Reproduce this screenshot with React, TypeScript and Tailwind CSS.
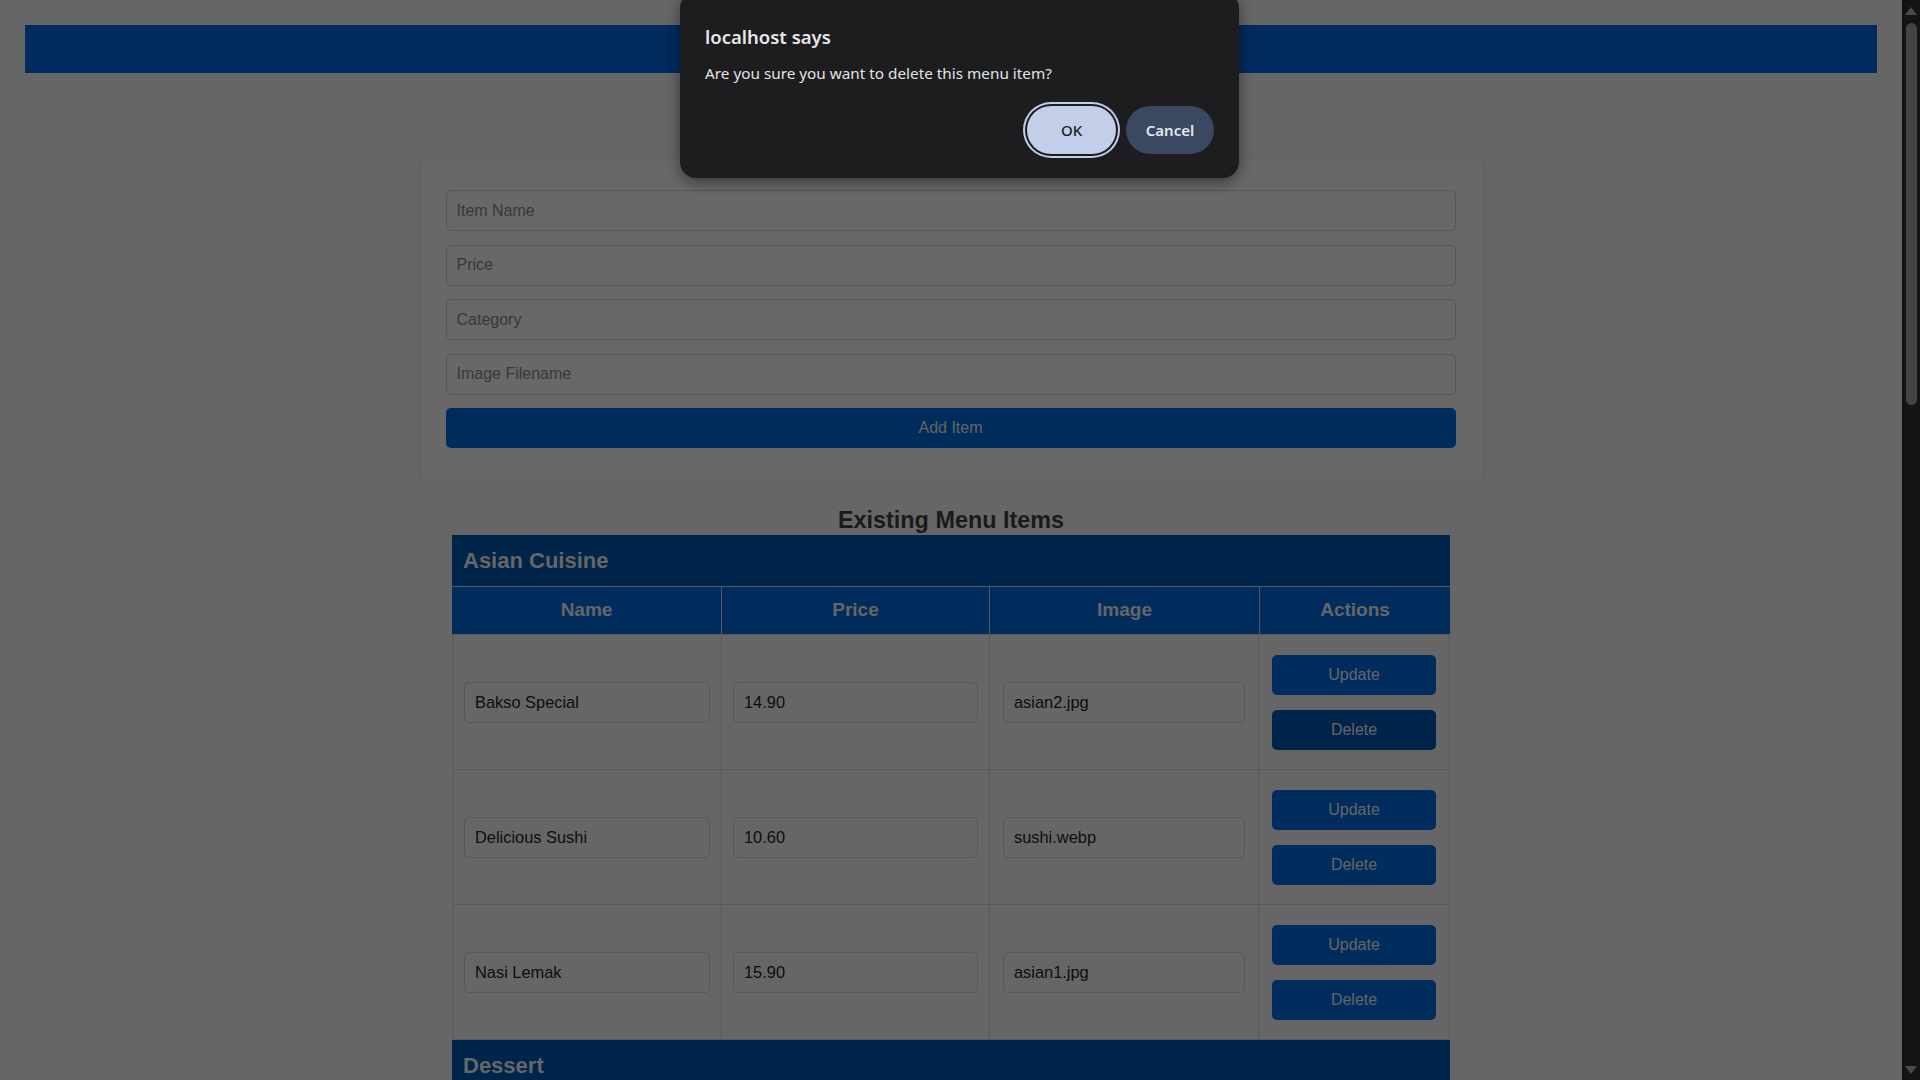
import React from "react";

const categories = [
	{
		name: "Asian Cuisine",
		items: [
			{ name: "Bakso Special", price: "14.90", image: "asian2.jpg" },
			{ name: "Delicious Sushi", price: "10.60", image: "sushi.webp" },
			{ name: "Nasi Lemak", price: "15.90", image: "asian1.jpg" },
		],
	},
	// rest of this list is below the fold
	{ name: "Dessert", items: [] as { name: string; price: string; image: string }[] },
];

const formFields = ["Item Name", "Price", "Category", "Image Filename"];

function ScrollBar() {
	return (
		<div className="w-[18px] h-full shrink-0 bg-[#141414] flex flex-col items-center">
			{/* up arrow */}
			<div className="mt-[7px] w-0 h-0 border-l-[6px] border-r-[6px] border-b-[8px] border-l-transparent border-r-transparent border-b-[#4a4a4a]" />
			<div className="mt-[8px] w-[11px] h-[382px] rounded-full bg-[#434343]" />
			<div className="flex-1" />
			{/* down arrow */}
			<div className="mb-[6px] w-0 h-0 border-l-[6px] border-r-[6px] border-t-[8px] border-l-transparent border-r-transparent border-t-[#4a4a4a]" />
		</div>
	);
}

function ConfirmDialog() {
	return (
		<div
			className="absolute left-[680px] top-[-8px] w-[559px] h-[186px] rounded-[16px] bg-[#1d1d1f] shadow-[0_4px_14px_rgba(0,0,0,0.45)] pt-[33px] px-[25px]"
			style={{ fontFamily: '"Noto Sans", "Open Sans", sans-serif' }}
		>
			<h1 className="text-[18.5px] leading-[24px] font-semibold text-[#e6e6e6]">localhost says</h1>
			<p className="mt-[14px] text-[15.3px] leading-[20px] text-[#e3e3e3]">Are you sure you want to delete this menu item?</p>

			<div className="mt-[23px] flex justify-end gap-[10px]">
				<button className="w-[89px] h-[48px] rounded-full bg-[#c3cfe8] text-[15px] font-medium text-[#1d1d1f] ring-2 ring-[#c3cfe8] ring-offset-2 ring-offset-[#1d1d1f]">
					OK
				</button>
				<button className="w-[88px] h-[48px] rounded-full bg-[#3b4861] text-[15px] font-semibold text-[#e2e7f2]">Cancel</button>
			</div>
		</div>
	);
}

export default function App() {
	return (
		<div className="relative w-[1920px] h-[1080px] flex overflow-hidden bg-[#666666]" style={{ fontFamily: '"Liberation Sans", Arial, sans-serif' }}>
			<div className="flex-1 h-full overflow-hidden">
				{/* top bar */}
				<div className="mx-[25px] mt-[25px] h-[48px] bg-[#002b5c]" />

				{/* add item form */}
				<div className="mx-auto mt-[86px] w-[1061px] rounded-[8px] bg-[#686868] shadow-[0_0_10px_rgba(0,0,0,0.08)] pt-[31px] pb-[33px] pl-[25px] pr-[26px] flex flex-col gap-[13.5px]">
					{formFields.map((f, k) => (
						<input
							key={k}
							readOnly
							placeholder={f}
							className="h-[41px] w-full rounded-[5px] border border-[#585858] bg-transparent px-[10px] text-[16px] text-[#111] placeholder:text-[#383838] outline-none"
						/>
					))}
					<button className="h-[40px] w-full rounded-[5px] bg-[#002c5c] text-[16px] text-[#666666]">Add Item</button>
				</div>

				{/* menu items */}
				<h2 className="mt-[26px] text-center text-[23.4px] leading-[27px] font-bold text-[#1a1a1a]">Existing Menu Items</h2>

				<div className="mx-auto mt-[1px] w-[998px]">
					{categories.map((c, k) => (
						<div key={k}>
							<div className="h-[51px] bg-[#00244a] flex items-center px-[11px] text-[22px] font-bold text-[#666666]">{c.name}</div>

							{c.items.length > 0 && (
								<div className="grid grid-cols-[269px_268px_270px_191px] h-[49px] bg-[#002d5e] border-t border-b border-[#5a5a5a] text-[19px] font-bold text-[#666666]">
									<div className="flex items-center justify-center">Name</div>
									<div className="flex items-center justify-center border-l border-[#5a5a5a]">Price</div>
									<div className="flex items-center justify-center border-l border-[#5a5a5a]">Image</div>
									<div className="flex items-center justify-center border-l border-[#5a5a5a]">Actions</div>
								</div>
							)}

							{c.items.map((i, j) => (
								<div
									key={j}
									className="grid grid-cols-[268px_268px_269px_191px] h-[135px] border-x border-b border-[#5a5a5a] text-[16.4px] text-[#0d0d0d]"
								>
									<div className="flex items-center px-[11px]">
										<input readOnly value={i.name} className="h-[41px] w-full rounded-[5px] border border-[#585858] bg-transparent px-[10px] outline-none" />
									</div>
									<div className="flex items-center px-[11px] border-l border-[#5a5a5a]">
										<input readOnly value={i.price} className="h-[41px] w-full rounded-[5px] border border-[#585858] bg-transparent px-[10px] outline-none" />
									</div>
									<div className="flex items-center px-[13px] border-l border-[#5a5a5a]">
										<input readOnly value={i.image} className="h-[41px] w-full rounded-[5px] border border-[#585858] bg-transparent px-[10px] outline-none" />
									</div>
									<div className="flex flex-col justify-center gap-[15px] px-[13px] border-l border-[#5a5a5a] text-[16px]">
										<button className="h-[40px] w-full rounded-[5px] bg-[#002d5e] text-[#666666]">Update</button>
										<button
											className={`h-[40px] w-full rounded-[5px] ${k == 0 && j == 0 ? "bg-[#00244a]" : "bg-[#002d5e]"} text-[#666666]`}
										>
											Delete
										</button>
									</div>
								</div>
							))}
						</div>
					))}
				</div>
			</div>

			<ScrollBar />

			<ConfirmDialog />
		</div>
	);
}
